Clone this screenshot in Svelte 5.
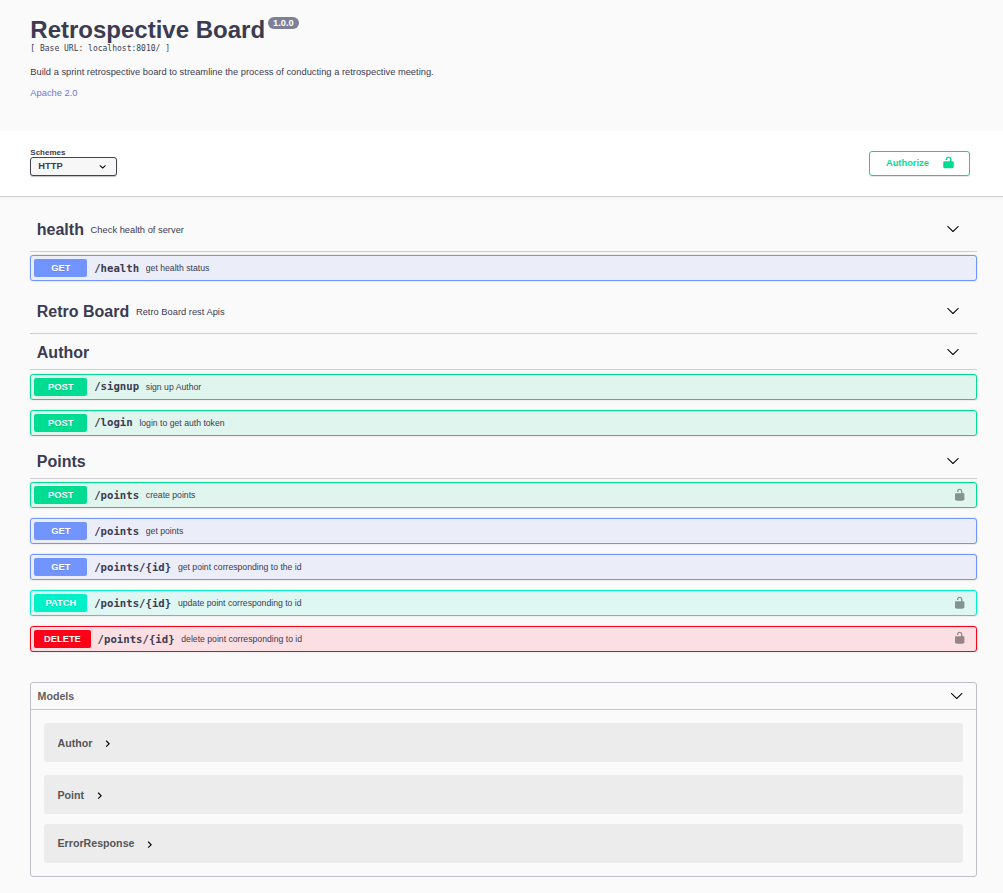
<script>
  const chevron =
    'M17.418 6.109c.272-.268.709-.268.979 0s.271.701 0 .969l-7.908 7.83c-.27.268-.707.268-.979 0l-7.908-7.83c-.27-.268-.27-.701 0-.969.271-.268.709-.268.979 0L10 13.25l7.418-7.141z';
  const lock =
    'M15.8 8H14V5.6C14 2.703 12.665 1 10 1 7.334 1 6 2.703 6 5.6V6h2v-.801C8 3.754 8.797 3 10 3c1.203 0 2 .754 2 2.199V8H4c-.553 0-1 .646-1 1.199V17c0 .549.428 1.139.951 1.307l1.197.387C5.672 18.861 6.55 19 7.1 19h5.8c.549 0 1.428-.139 1.951-.307l1.196-.387c.524-.167.953-.757.953-1.306V9.199C17 8.646 16.352 8 15.8 8z';

  const tags = [
    {
      name: 'health',
      note: 'Check health of server',
      ops: [{ method: 'get', path: '/health', text: 'get health status' }]
    },
    { name: 'Retro Board', note: 'Retro Board rest Apis', ops: [] },
    {
      name: 'Author',
      ops: [
        { method: 'post', path: '/signup', text: 'sign up Author' },
        { method: 'post', path: '/login', text: 'login to get auth token' }
      ]
    },
    {
      name: 'Points',
      ops: [
        { method: 'post', path: '/points', text: 'create points', locked: true },
        { method: 'get', path: '/points', text: 'get points' },
        { method: 'get', path: '/points/{id}', text: 'get point corresponding to the id' },
        { method: 'patch', path: '/points/{id}', text: 'update point corresponding to id', locked: true },
        { method: 'delete', path: '/points/{id}', text: 'delete point corresponding to id', locked: true }
      ]
    }
  ];
  const models = ['Author', 'Point', 'ErrorResponse'];
</script>

<div class="page">
  <header>
    <h1>Retrospective Board<span class="version">1.0.0</span></h1>
    <div class="base">[ Base URL: localhost:8010/ ]</div>
    <p>Build a sprint retrospective board to streamline the process of conducting a retrospective meeting.</p>
    <a href="#license">Apache 2.0</a>
  </header>

  <section class="schemes">
    <div class="scheme">
      <span class="label">Schemes</span>
      <button class="select">
        HTTP
        <svg viewBox="0 0 20 20" width="13.4" height="13.4"><path d="M13.418 7.859c.271-.268.709-.268.978 0 .27.268.272.701 0 .969l-3.908 3.83c-.27.268-.707.268-.979 0l-3.908-3.83c-.27-.267-.27-.701 0-.969.271-.268.709-.268.978 0L10 11l3.418-3.141z" /></svg>
      </button>
    </div>
    <button class="authorize">
      Authorize
      <svg viewBox="0 0 20 20" width="15" height="13" preserveAspectRatio="none"><path d={lock} /></svg>
    </button>
  </section>

  <main>
    {#each tags as tag}
      <section class="tag">
        <div class="tag-head" class:noted={tag.note}>
          <h2>{tag.name}</h2>
          {#if tag.note}<small>{tag.note}</small>{/if}
          <svg class="arrow" viewBox="0 0 20 20" width="13.4" height="13.4"><path d={chevron} /></svg>
        </div>
        {#if tag.ops.length}
          <div class="ops">
            {#each tag.ops as op}
              <div class="op {op.method}">
                <span class="method">{op.method.toUpperCase()}</span>
                <span class="path">{op.path}</span>
                <span class="text">{op.text}</span>
                {#if op.locked}
                  <svg class="lock" viewBox="0 0 20 20" width="13.4" height="13.4"><path d={lock} /></svg>
                {/if}
              </div>
            {/each}
          </div>
        {/if}
      </section>
    {/each}

    <section class="models">
      <div class="models-head">
        Models
        <svg viewBox="0 0 20 20" width="13.4" height="13.4"><path d={chevron} /></svg>
      </div>
      <div class="models-body">
        {#each models as model}
          <div class="model">
            <span>{model}</span>
            <svg viewBox="0 0 24 24" width="13.4" height="13.4"><path d="M10 6L8.59 7.41 13.17 12l-4.58 4.59L10 18l6-6z" /></svg>
          </div>
        {/each}
      </div>
    </section>
  </main>
</div>

<style>
  :global(body) {
    background: #fafafa;
  }
  .page,
  button {
    font-family: 'Liberation Sans', Arial, sans-serif;
    color: #3b3b52;
  }
  .page {
    height: 893px;
    overflow: hidden;
    background: #fafafa;
  }
  .page * {
    box-sizing: border-box;
  }
  svg {
    display: block;
    flex: none;
  }
  header {
    height: 131px;
    padding: 16px 30px 0 30.3px;
  }
  h1 {
    display: flex;
    align-items: flex-start;
    margin: 0;
    font-size: 24px;
    line-height: 27px;
    height: 27px;
  }
  .version {
    margin: 1px 0 0 3px;
    height: 12px;
    padding: 0 5px;
    border-radius: 6px;
    background: #7d7f96;
    color: #fff;
    font-size: 9.33px;
    line-height: 12px;
  }
  .base {
    padding-top: 1px;
    font: 8px/10px 'DejaVu Sans Mono', monospace;
  }
  header p {
    margin: 12px 0 0;
    font-size: 9.33px;
    line-height: 12px;
  }
  header a {
    display: block;
    margin-top: 9px;
    font-size: 9.33px;
    line-height: 12px;
    color: #6d76e0;
    text-decoration: none;
  }
  .schemes {
    display: flex;
    justify-content: space-between;
    align-items: flex-start;
    height: 65px;
    padding: 17px 33px 0 30px;
    background: #fff;
    box-shadow: 0 1px 1px rgba(0, 0, 0, 0.16);
  }
  .label {
    display: block;
    height: 9px;
    padding-left: 0.3px;
    font-size: 8px;
    line-height: 9px;
    font-weight: bold;
  }
  .select {
    display: flex;
    align-items: center;
    justify-content: space-between;
    width: 87px;
    height: 19px;
    padding: 0 7px 1px 7.3px;
    border: 1px solid #41444e;
    border-radius: 3px;
    background: #f7f7f7;
    box-shadow: 0 1px 1px rgba(0, 0, 0, 0.25);
    font-size: 9.33px;
    font-weight: bold;
  }
  .select svg {
    margin-top: 1px;
  }
  .authorize {
    display: flex;
    align-items: center;
    justify-content: space-between;
    width: 101px;
    height: 25px;
    margin-top: 3px;
    padding: 0 12.6px 1px 15.9px;
    border: 1px solid #00dd92;
    border-radius: 3px;
    background: transparent;
    box-shadow: 0 1px 1px rgba(0, 0, 0, 0.1);
    color: #00dd92;
    font-size: 9.33px;
    font-weight: bold;
  }
  .authorize svg {
    margin-bottom: 1px;
    fill: #00dd92;
  }
  main {
    padding: 11px 26px 0 30px;
  }
  .tag-head {
    display: flex;
    align-items: center;
    height: 36px;
    padding: 0 17px 0 6.8px;
    border-bottom: 1px solid #cecdd1;
  }
  .tag-head.noted {
    height: 45px;
  }
  h2 {
    margin: 0;
    padding-top: 2px;
    font-size: 16px;
    line-height: 20px;
  }
  .noted h2 {
    padding-top: 1px;
  }
  small {
    margin-left: 6.7px;
    padding-top: 1px;
    font-size: 9.33px;
  }
  .arrow {
    width: 14px;
    margin-left: auto;
  }
  .ops {
    display: flex;
    flex-direction: column;
    gap: 10px;
    padding: 3px 0 7px;
  }
  .tag:nth-child(1) .ops {
    padding-bottom: 8px;
  }
  .tag:nth-child(3) .ops {
    padding-top: 4px;
  }
  .op {
    display: flex;
    align-items: center;
    height: 26px;
    padding: 0 9.6px 0 3px;
    border: 1px solid var(--c);
    border-radius: 3px;
    background: var(--bg);
    box-shadow: 0 0 2px rgba(0, 0, 0, 0.19);
  }
  .get {
    --c: #7194ff;
    --bg: #ebedf9;
  }
  .post {
    --c: #00dd92;
    --bg: #e0f5ed;
  }
  .patch {
    --c: #00f0c8;
    --bg: #def7f2;
  }
  .delete {
    --c: #ff0018;
    --bg: #fbdfe2;
  }
  .method {
    min-width: 53px;
    height: 18px;
    padding: 0 10px;
    border-radius: 2px;
    background: var(--c);
    color: #fff;
    font-size: 9.33px;
    font-weight: bold;
    line-height: 18px;
    text-align: center;
    text-shadow: 0 1px 0 rgba(0, 0, 0, 0.1);
  }
  .get .method,
  .post .method,
  .patch .method {
    padding: 0 9.7px 0 10.3px;
  }
  .path {
    margin-left: 7.2px;
    padding-top: 2px;
    font: bold 10.667px/14px 'DejaVu Sans Mono', monospace;
  }
  .tag:nth-child(3) .path {
    padding-top: 0;
  }
  .delete .path {
    margin-left: 6.8px;
  }
  .text {
    margin-left: 6.7px;
    font-size: 8.667px;
  }
  .lock {
    margin-left: auto;
    fill: #000;
    opacity: 0.4;
  }
  .post .lock {
    margin-bottom: 1px;
  }
  .delete .lock {
    margin-bottom: 2px;
  }
  .models {
    height: 195px;
    margin-top: 23px;
    border: 1px solid #bfbfc7;
    border-radius: 3px;
  }
  .models-head {
    display: flex;
    align-items: center;
    justify-content: space-between;
    height: 27px;
    padding: 0 12.6px 0 6.5px;
    border-bottom: 1px solid #c7c7ce;
    color: #606060;
    font-size: 10.667px;
    font-weight: bold;
  }
  .models-body {
    padding: 13px 13px 0;
  }
  .model {
    display: flex;
    align-items: center;
    gap: 9px;
    height: 39px;
    margin-bottom: 13px;
    padding-left: 13.5px;
    border-radius: 3px;
    background: #ececec;
    color: #555;
    font-size: 10.667px;
    font-weight: bold;
  }
  .model svg {
    margin-top: 2px;
  }
  .model:nth-child(2) {
    margin-bottom: 10px;
  }
  .model:nth-child(3) {
    gap: 8px;
  }
  .model:nth-child(3) span {
    padding-bottom: 2px;
  }
</style>
